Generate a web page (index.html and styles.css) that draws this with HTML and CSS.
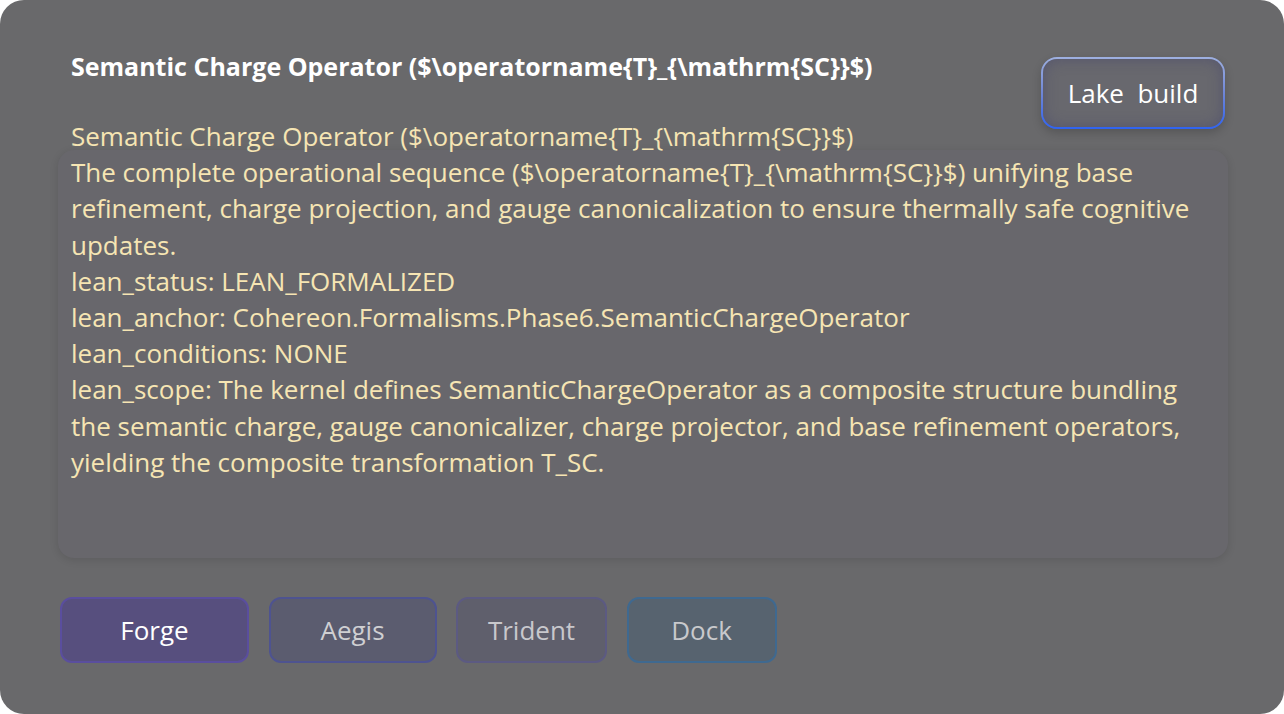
FILE: index.html
```html
<!DOCTYPE html>
<html lang="en">
<head>
<meta charset="utf-8">
<title>Semantic Charge Operator</title>
<link rel="stylesheet" href="styles.css">
</head>
<body>
<div class="panel">
  <h1 class="title">Semantic Charge Operator ($\operatorname{T}_{\mathrm{SC}}$)</h1>
  <button class="lake-btn">Lake&nbsp; build</button>
  <div class="content">
    <div class="body-text">
      <div>Semantic Charge Operator ($\operatorname{T}_{\mathrm{SC}}$)</div>
      <div>The complete operational sequence ($\operatorname{T}_{\mathrm{SC}}$) unifying base refinement, charge projection, and gauge canonicalization to ensure thermally safe cognitive updates.</div>
      <div>lean_status: LEAN_FORMALIZED</div>
      <div>lean_anchor: Cohereon.Formalisms.Phase6.SemanticChargeOperator</div>
      <div>lean_conditions: NONE</div>
      <div>lean_scope: The kernel defines SemanticChargeOperator as a composite structure bundling the semantic charge, gauge canonicalizer, charge projector, and base refinement operators, yielding the composite transformation T_SC.</div>
    </div>
  </div>
  <div class="tabs">
    <button class="tab tab-forge">Forge</button>
    <button class="tab tab-aegis">Aegis</button>
    <button class="tab tab-trident">Trident</button>
    <button class="tab tab-dock">Dock</button>
  </div>
</div>
</body>
</html>
```
FILE: styles.css
```css
* { box-sizing: border-box; }
html, body { margin: 0; padding: 0; background: #ffffff; }
body { font-family: "Open Sans", "Noto Sans", sans-serif; }

.panel {
  position: relative;
  width: 1284px;
  height: 714px;
  border-radius: 24px;
  background: #69696b;
  padding: 48px 56px 0 58px;
  overflow: hidden;
}

.title {
  margin: 0 0 0 13px;
  font-size: 25px;
  font-weight: 700;
  line-height: 36px;
  color: #ffffff;
}

.lake-btn {
  position: absolute;
  top: 57px;
  right: 59px;
  width: 184px;
  height: 72px;
  border: 2px solid transparent;
  border-radius: 16px;
  background:
    linear-gradient(#68686e, #68686e) padding-box,
    linear-gradient(180deg, #9eb0e0 0%, #6f86d6 50%, #2f63f2 100%) border-box;
  box-shadow: inset 0 0 14px rgba(70, 70, 110, 0.55), 0 4px 10px rgba(0, 0, 0, 0.18);
  color: #ffffff;
  font-family: "Open Sans", "Noto Sans", sans-serif;
  font-size: 26px;
  line-height: 1;
  padding: 0;
}

.content {
  position: relative;
  margin-top: 34px;
  min-height: 440px;
}

.content::before {
  content: "";
  position: absolute;
  top: 32px;
  left: 0;
  right: 0;
  height: 408px;
  border-radius: 16px;
  background: #68676c;
  box-shadow: 0 2px 8px rgba(0, 0, 0, 0.12);
}

.body-text {
  position: relative;
  padding: 0 12px 0 13px;
  color: #f6e5b3;
  font-size: 26px;
  line-height: 36.2px;
}

.tabs {
  display: flex;
  gap: 19.5px;
  margin: 39px 0 0 2px;
}

.tab {
  height: 66px;
  border-radius: 12px;
  border: 2px solid;
  font-family: "Open Sans", "Noto Sans", sans-serif;
  font-size: 26px;
  padding: 0;
}

.tab-forge { width: 189px; background: #574f7e; border-color: #5a4e9e; color: #ffffff; }
.tab-aegis { width: 168px; background: #5b5c6f; border-color: #4e5390; color: #cfcfd2; }
.tab-trident { width: 151px; background: #5f5f6c; border-color: #5c5a82; color: #c8c8cc; }
.tab-dock { width: 150px; background: #57636f; border-color: #3f6990; color: #c8c9cc; }
```
